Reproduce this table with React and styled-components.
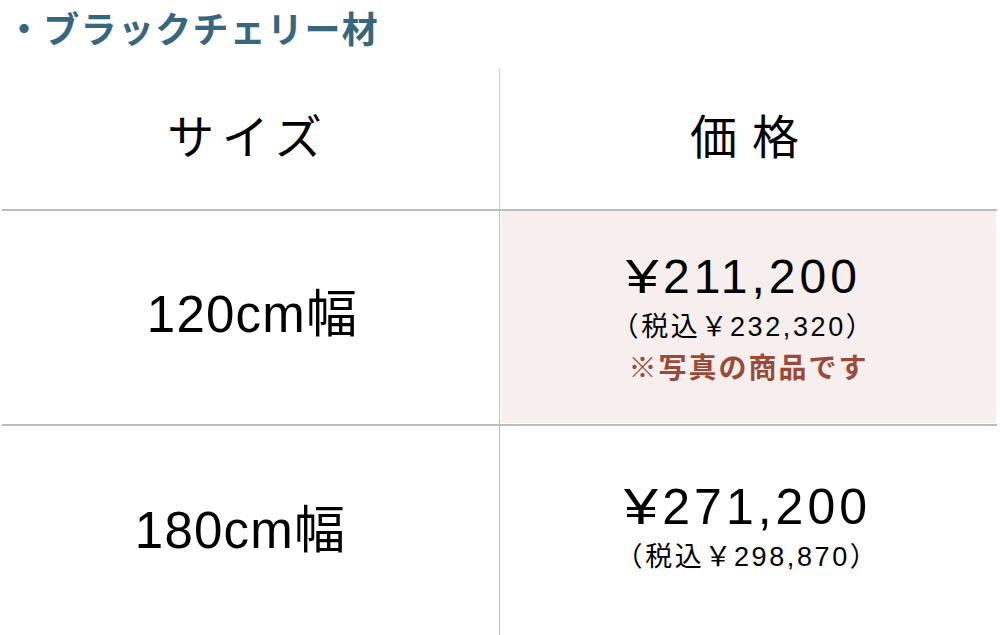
import React from "react";
import styled, { createGlobalStyle } from "styled-components";

const GlobalStyle = createGlobalStyle`
  html, body {
    margin: 0;
    padding: 0;
    background: #ffffff;
  }
  body {
    font-family: "Liberation Sans", "Noto Sans CJK JP", sans-serif;
    color: #000000;
    overflow: hidden;
  }
`;

const Page = styled.div`
  width: 1000px;
  height: 635px;
  padding: 0 3px 0 2px;
  box-sizing: border-box;
`;

const Title = styled.h2`
  margin: 0;
  padding: 9px 0 0 4px;
  height: 68px;
  box-sizing: border-box;
  font-family: "Noto Sans CJK JP", sans-serif;
  font-weight: 700;
  font-size: 36px;
  line-height: 36px;
  letter-spacing: 1.3px;
  color: #38677d;
`;

const Table = styled.div`
  display: grid;
  grid-template-columns: 498px 1fr;
`;

const Cell = styled.div`
  display: flex;
  flex-direction: column;
  align-items: center;
  justify-content: center;
  box-sizing: border-box;
  height: ${({ $h }) => $h}px;
  border-right: ${({ $right }) => ($right ? `1px solid ${$right}` : "none")};
  border-bottom: ${({ $line }) => ($line ? "2px solid #bdbdbd" : "none")};
  padding: ${({ $pad }) => $pad || "0"};
`;

const PriceCell = styled(Cell)`
  background: ${({ $hl }) => ($hl ? "#f6efed" : "transparent")};
  background-clip: content-box;
`;

const HeadText = styled.span`
  font-family: "Noto Sans CJK JP", sans-serif;
  font-size: 47px;
  line-height: 1;
  letter-spacing: ${({ $ls }) => $ls}px;
  margin-right: ${({ $ls }) => -$ls}px;
`;

const SizeText = styled.span`
  font-size: 51px;
  line-height: 1;
  letter-spacing: 1.2px;
`;

const Price = styled.div`
  margin-right: ${({ $shift }) => $shift}px;
  font-size: ${({ $size }) => $size}px;
  line-height: 52px;
  letter-spacing: 4px;
`;

const Yen = styled.span`
  display: inline-block;
  transform: scaleX(1.22);
  transform-origin: left center;
  margin-right: 0.13em;
`;

const TaxPrice = styled.div`
  margin-top: 6px;
  margin-right: ${({ $shift }) => $shift}px;
  font-size: 27px;
  line-height: 32px;
  letter-spacing: 2.6px;
`;

const WideYen = styled.span`
  font-family: "Noto Sans CJK JP", sans-serif;
`;

const Note = styled.div`
  margin-top: 6px;
  font-family: "Noto Sans CJK JP", sans-serif;
  font-weight: 700;
  font-size: 28px;
  line-height: 34px;
  letter-spacing: 2px;
  color: #9b4a3a;
`;

const rows = [
  { size: "120cm幅", price: "211,200", tax: "232,320", note: "※写真の商品です", hl: true, pad: "0 0 7px 4px", psize: 48, shift: 10 },
  { size: "180cm幅", price: "271,200", tax: "298,870", pad: "0 20px 6px 0", psize: 50, shift: 2 },
];

export default function App() {
  return (
    <>
      <GlobalStyle />
      <Page>
        <Title>・ブラックチェリー材</Title>
        <Table>
          <Cell $h={143} $line $right="#cfcfcf" $pad="0 12px 11px 0">
            <HeadText $ls={7.5}>サイズ</HeadText>
          </Cell>
          <Cell $h={143} $line $pad="0 8px 11px 0">
            <HeadText $ls={15}>価格</HeadText>
          </Cell>
          {rows.map((r, i) => (
            <React.Fragment key={r.size}>
              <Cell $h={215} $line={i === 0} $right="#bdbdbd" $pad={r.pad}>
                <SizeText>{r.size}</SizeText>
              </Cell>
              <PriceCell
                $h={215}
                $line={i === 0}
                $hl={r.hl}
                $pad={r.hl ? "0 1px 1px 1px" : "0 0 14px 0"}
              >
                <Price $size={r.psize} $shift={r.shift}>
                  <Yen>¥</Yen>
                  {r.price}
                </Price>
                <TaxPrice $shift={r.shift}>
                  （税込<WideYen>￥</WideYen>
                  {r.tax}）
                </TaxPrice>
                {r.note && <Note>{r.note}</Note>}
              </PriceCell>
            </React.Fragment>
          ))}
        </Table>
      </Page>
    </>
  );
}
